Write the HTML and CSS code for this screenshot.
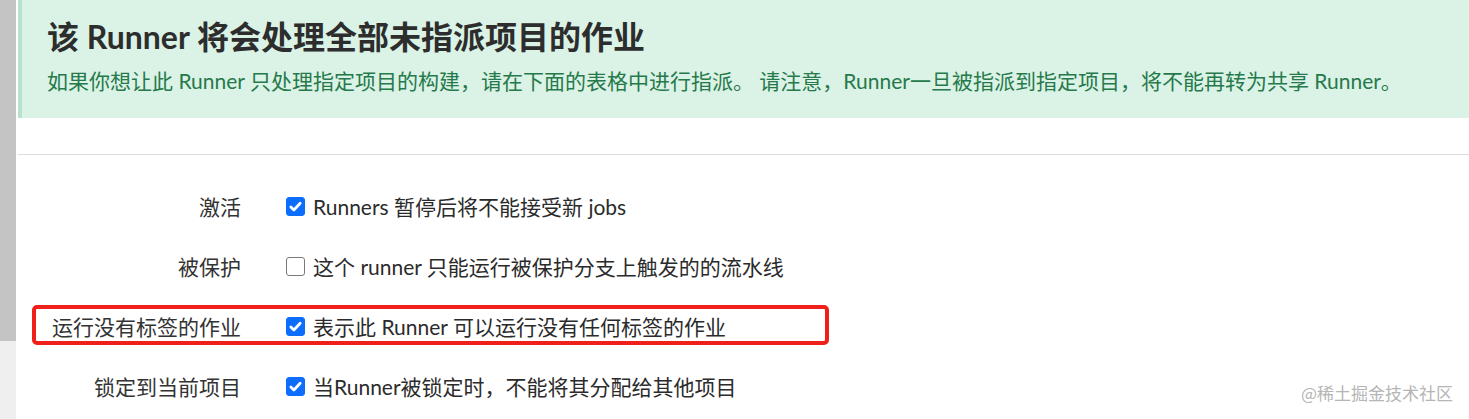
FILE: index.html
```html
<!DOCTYPE html>
<html lang="zh-CN">
<head>
  <meta charset="UTF-8">
  <meta name="viewport" content="width=device-width, initial-scale=1.0">
  <title>Runner 设置</title>
  <link rel="stylesheet" href="styles.css">
</head>
<body>
  <div class="page">
    <aside class="sidebar">
      <div class="sidebar-top"></div>
    </aside>

    <main class="content">
      <div class="alert">
        <h4 class="alert-title">该 Runner 将会处理全部未指派项目的作业</h4>
        <p class="alert-text">如果你想让此 Runner 只处理指定项目的构建，请在下面的表格中进行指派。 请注意，Runner一旦被指派到指定项目，将不能再转为共享 Runner。</p>
      </div>

      <hr class="divider">

      <form class="settings">
        <div class="row">
          <label class="row-label">激活</label>
          <div class="row-field">
            <span class="check checked"><svg viewBox="0 0 16 16"><path d="M3.6 8.4l2.9 2.9L12.4 5"/></svg></span>
            <span>Runners 暂停后将不能接受新 jobs</span>
          </div>
        </div>

        <div class="row">
          <label class="row-label">被保护</label>
          <div class="row-field">
            <span class="check"></span>
            <span>这个 runner 只能运行被保护分支上触发的的流水线</span>
          </div>
        </div>

        <div class="row highlighted">
          <label class="row-label">运行没有标签的作业</label>
          <div class="row-field">
            <span class="check checked"><svg viewBox="0 0 16 16"><path d="M3.6 8.4l2.9 2.9L12.4 5"/></svg></span>
            <span>表示此 Runner 可以运行没有任何标签的作业</span>
          </div>
          <div class="mark"></div>
        </div>

        <div class="row">
          <label class="row-label">锁定到当前项目</label>
          <div class="row-field">
            <span class="check checked"><svg viewBox="0 0 16 16"><path d="M3.6 8.4l2.9 2.9L12.4 5"/></svg></span>
            <span>当Runner被锁定时，不能将其分配给其他项目</span>
          </div>
        </div>
      </form>
    </main>
  </div>

  <div class="watermark">@稀土掘金技术社区</div>
</body>
</html>
```

FILE: styles.css
```css
/* Runner settings */
body {
  margin: 0;
  padding: 0;
  background-color: #fff;
  font-family: Lato, "Noto Sans CJK SC", sans-serif;
  color: #333;
  overflow: hidden;
}

.page {
  display: flex;
  min-height: 419px;
}

.sidebar {
  width: 16px;
  flex-shrink: 0;
  background-color: #efefef;
}

.sidebar-top {
  height: 341px;
  background-color: #c4c4c4;
}

.content {
  flex: 1;
  padding-left: 2px;
}

.alert {
  background-color: #daf3e6;
  border-left: 4px solid #b6e3cc;
  padding: 17px 20px 21px 25px;
  height: 80px;
}

.alert-title {
  margin: 0;
  font-size: 32px;
  font-weight: bold;
  line-height: 40px;
  color: #2d2d2d;
}

.alert-text {
  margin: 9px 0 0;
  font-size: 21px;
  line-height: 30px;
  color: #26794a;
  white-space: nowrap;
}

.divider {
  margin: 36px 0 0;
  border: 0;
  border-top: 1px solid #dcdcdc;
}

.settings {
  padding-top: 21px;
}

.row {
  position: relative;
  display: grid;
  grid-template-columns: 223px 1fr;
  column-gap: 45px;
  align-items: center;
  height: 60px;
  font-size: 21px;
}

.row-label {
  text-align: right;
  color: #333;
}

.row-field {
  display: flex;
  align-items: center;
  gap: 8px;
  color: #2b2b2b;
}

.check {
  width: 17px;
  height: 17px;
  border: 1px solid #7a7a7a;
  border-radius: 3px;
  background-color: #fff;
  display: flex;
  align-items: center;
  justify-content: center;
}

.check.checked {
  background-color: #0d6efd;
  border-color: #0d6efd;
}

.check svg {
  width: 17px;
  height: 17px;
  fill: none;
  stroke: #fff;
  stroke-width: 2.6;
  stroke-linecap: round;
  stroke-linejoin: round;
}

/* red annotation box drawn over the row */
.mark {
  position: absolute;
  left: 14px;
  top: 9px;
  width: 789px;
  height: 32px;
  border: 4px solid #ef1f1a;
  border-radius: 5px;
}

.watermark {
  position: absolute;
  right: 16px;
  bottom: 14px;
  font-size: 17px;
  color: #b5b5b5;
  font-family: "Noto Sans CJK SC", sans-serif;
}
```
